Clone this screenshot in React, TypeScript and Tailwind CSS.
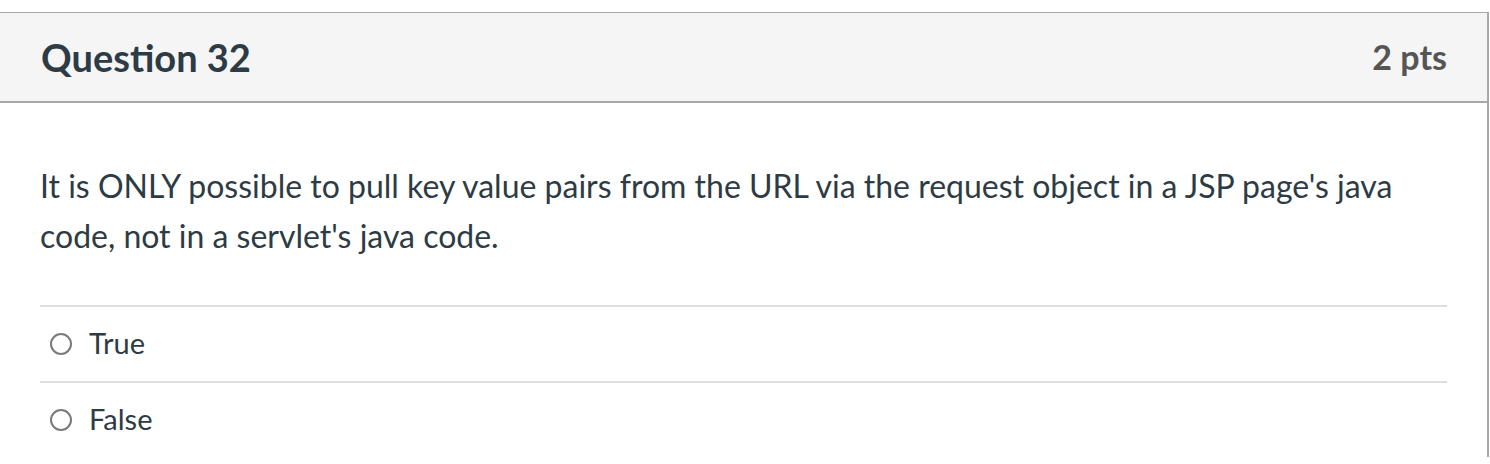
export default function App() {
  const options = ['True', 'False']

  return (
    <div className="min-h-screen bg-white pt-3" style={{ fontFamily: 'Lato, "Noto Sans", sans-serif' }}>
      <div className="mr-[1px] border-t border-r-2 border-[#a8a8a8] bg-white">
        {/* Header */}
        <div className="flex h-[90px] items-center justify-between border-b-2 border-[#a8a8a8] bg-[#f5f5f5] pl-[41px] pr-[40px]">
          <h2 className="text-[38px] font-bold leading-none text-[#2d3b45]">Question 32</h2>
          <span className="text-[34px] font-bold leading-none text-[#555555]">2 pts</span>
        </div>

        {/* Body */}
        <div className="px-[40px] pt-[58px]">
          <p className="text-[32px] leading-[50px] text-[#2d3b45]">
            It is ONLY possible to pull key value pairs from the URL via the request object in a JSP page's java code, not in a servlet's java code.
          </p>

          <div className="mt-[44px]">
            {options.map(o => (
              <label key={o} className="flex h-[76px] items-center border-t-2 border-[#dddddd]">
                <span className="ml-[10px] mr-[17px] box-border h-[22px] w-[22px] rounded-full border-2 border-[#7a7a7a] bg-white" />
                <span className="-mt-[3px] text-[29px] text-[#2d3b45]">{o}</span>
              </label>
            ))}
          </div>
        </div>
      </div>
    </div>
  )
}
